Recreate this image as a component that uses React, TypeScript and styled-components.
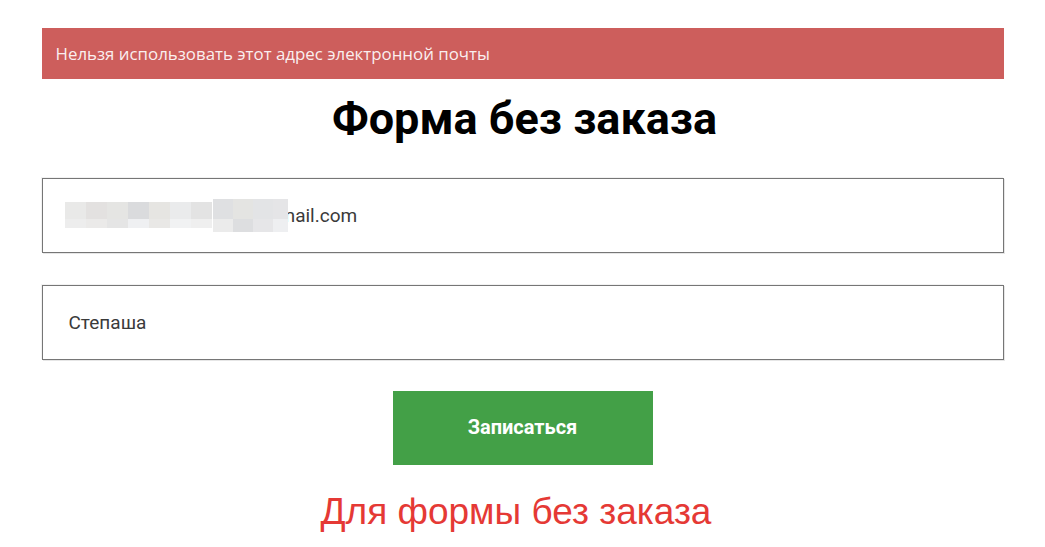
import React from 'react'
import styled, { createGlobalStyle } from 'styled-components'

const GlobalStyle = createGlobalStyle`
    body {
        margin: 0;
        background: #fff;
        font-family: Roboto, 'Liberation Sans', sans-serif;
    }
`

// pixelated part of the address (blurred in the screenshot)
const leftCells = [
    ['#e9e9e8', '#e3e1e0', '#e5e5e3', '#dadbdd', '#e6e5e2', '#eaebec', '#e3e3e3'],
    ['#ededed', '#ebeae9', '#e5e5e5', '#eff0f2', '#e9e8e6', '#f1f2f3', '#efefef'],
]
const rightCells = [
    ['#dfe0e2', '#e4e4e2', '#e3e4e6', '#e5e5e7'],
    ['#ebebeb', '#dddee0', '#e6e6e8', '#eeeff1'],
]

const App = () => {
    return (
        <>
            <GlobalStyle />
            <Page>
                <Alert>Нельзя использовать этот адрес электронной почты</Alert>
                <Title>Форма без заказа</Title>
                <Form>
                    <Field>
                        <Mosaic>
                            <MosaicBlock $top={3} $rows={[17, 9]}>
                                {leftCells.map((row, i) =>
                                    row.map((c, j) => <Cell key={`${i}-${j}`} $color={c} />)
                                )}
                            </MosaicBlock>
                            <MosaicBlock $top={0} $rows={[20, 13]}>
                                {rightCells.map((row, i) =>
                                    row.map((c, j) => <Cell key={`${i}-${j}`} $color={c} />)
                                )}
                            </MosaicBlock>
                        </Mosaic>
                        <Value>mail.com</Value>
                    </Field>
                    <Field>
                        <Value>Степаша</Value>
                    </Field>
                    <Submit>Записаться</Submit>
                </Form>
                <Note>Для формы без заказа</Note>
            </Page>
        </>
    )
}

export default App

const Page = styled.div`
    width: 962px;
    margin: 28px auto 0;
    display: flex;
    flex-direction: column;
    align-items: stretch;
`

const Alert = styled.div`
    height: 51px;
    background: #cd5e5c;
    color: rgba(255, 255, 255, 0.92);
    font-family: 'Open Sans', sans-serif;
    font-size: 16.85px;
    display: flex;
    align-items: center;
    padding: 0 14px;
`

const Title = styled.h1`
    margin: 14px 0 0;
    height: 85px;
    padding-left: 4px;
    text-align: center;
    font-family: Roboto, sans-serif;
    font-weight: 700;
    font-size: 45px;
    color: #000;
    line-height: 52px;
`

const Form = styled.div`
    display: flex;
    flex-direction: column;
    align-items: center;
    gap: 32px;
`

const Field = styled.div`
    box-sizing: border-box;
    width: 100%;
    height: 75px;
    border: 1px solid #767676;
    box-shadow: 1px 1px 0 #e6e6e6, -1px -1px 0 #f2f2f2;
    display: flex;
    align-items: center;
    padding: 0 26px;
`

const Value = styled.span`
    font-family: Roboto, sans-serif;
    font-size: 19px;
    color: #3a3a3a;
`

const Mosaic = styled.div`
    position: relative;
    z-index: 1;
    display: flex;
    align-items: flex-start;
    margin: 0 -9px 0 -4px;
    height: 33px;
`

const MosaicBlock = styled.div<{ $top: number; $rows: number[] }>`
    margin-top: ${(p) => p.$top}px;
    display: grid;
    grid-template-rows: ${(p) => p.$rows.map((r) => `${r}px`).join(' ')};
    &:first-child {
        width: 148px;
        grid-template-columns: repeat(7, 1fr);
    }
    &:last-child {
        width: 75px;
        grid-template-columns: 20px 20px 20px 15px;
    }
`

const Cell = styled.div<{ $color: string }>`
    background: ${(p) => p.$color};
`

const Submit = styled.button`
    width: 260px;
    height: 74px;
    margin-top: -1px;
    border: none;
    background: #43a047;
    color: #fff;
    font-family: Roboto, sans-serif;
    font-weight: 700;
    font-size: 20px;
    padding: 0 0 3px;
    cursor: pointer;
`

const Note = styled.div`
    margin-top: 26px;
    padding-right: 13px;
    text-align: center;
    font-family: 'Liberation Sans', Arial, sans-serif;
    font-size: 37px;
    color: #e53935;
`
